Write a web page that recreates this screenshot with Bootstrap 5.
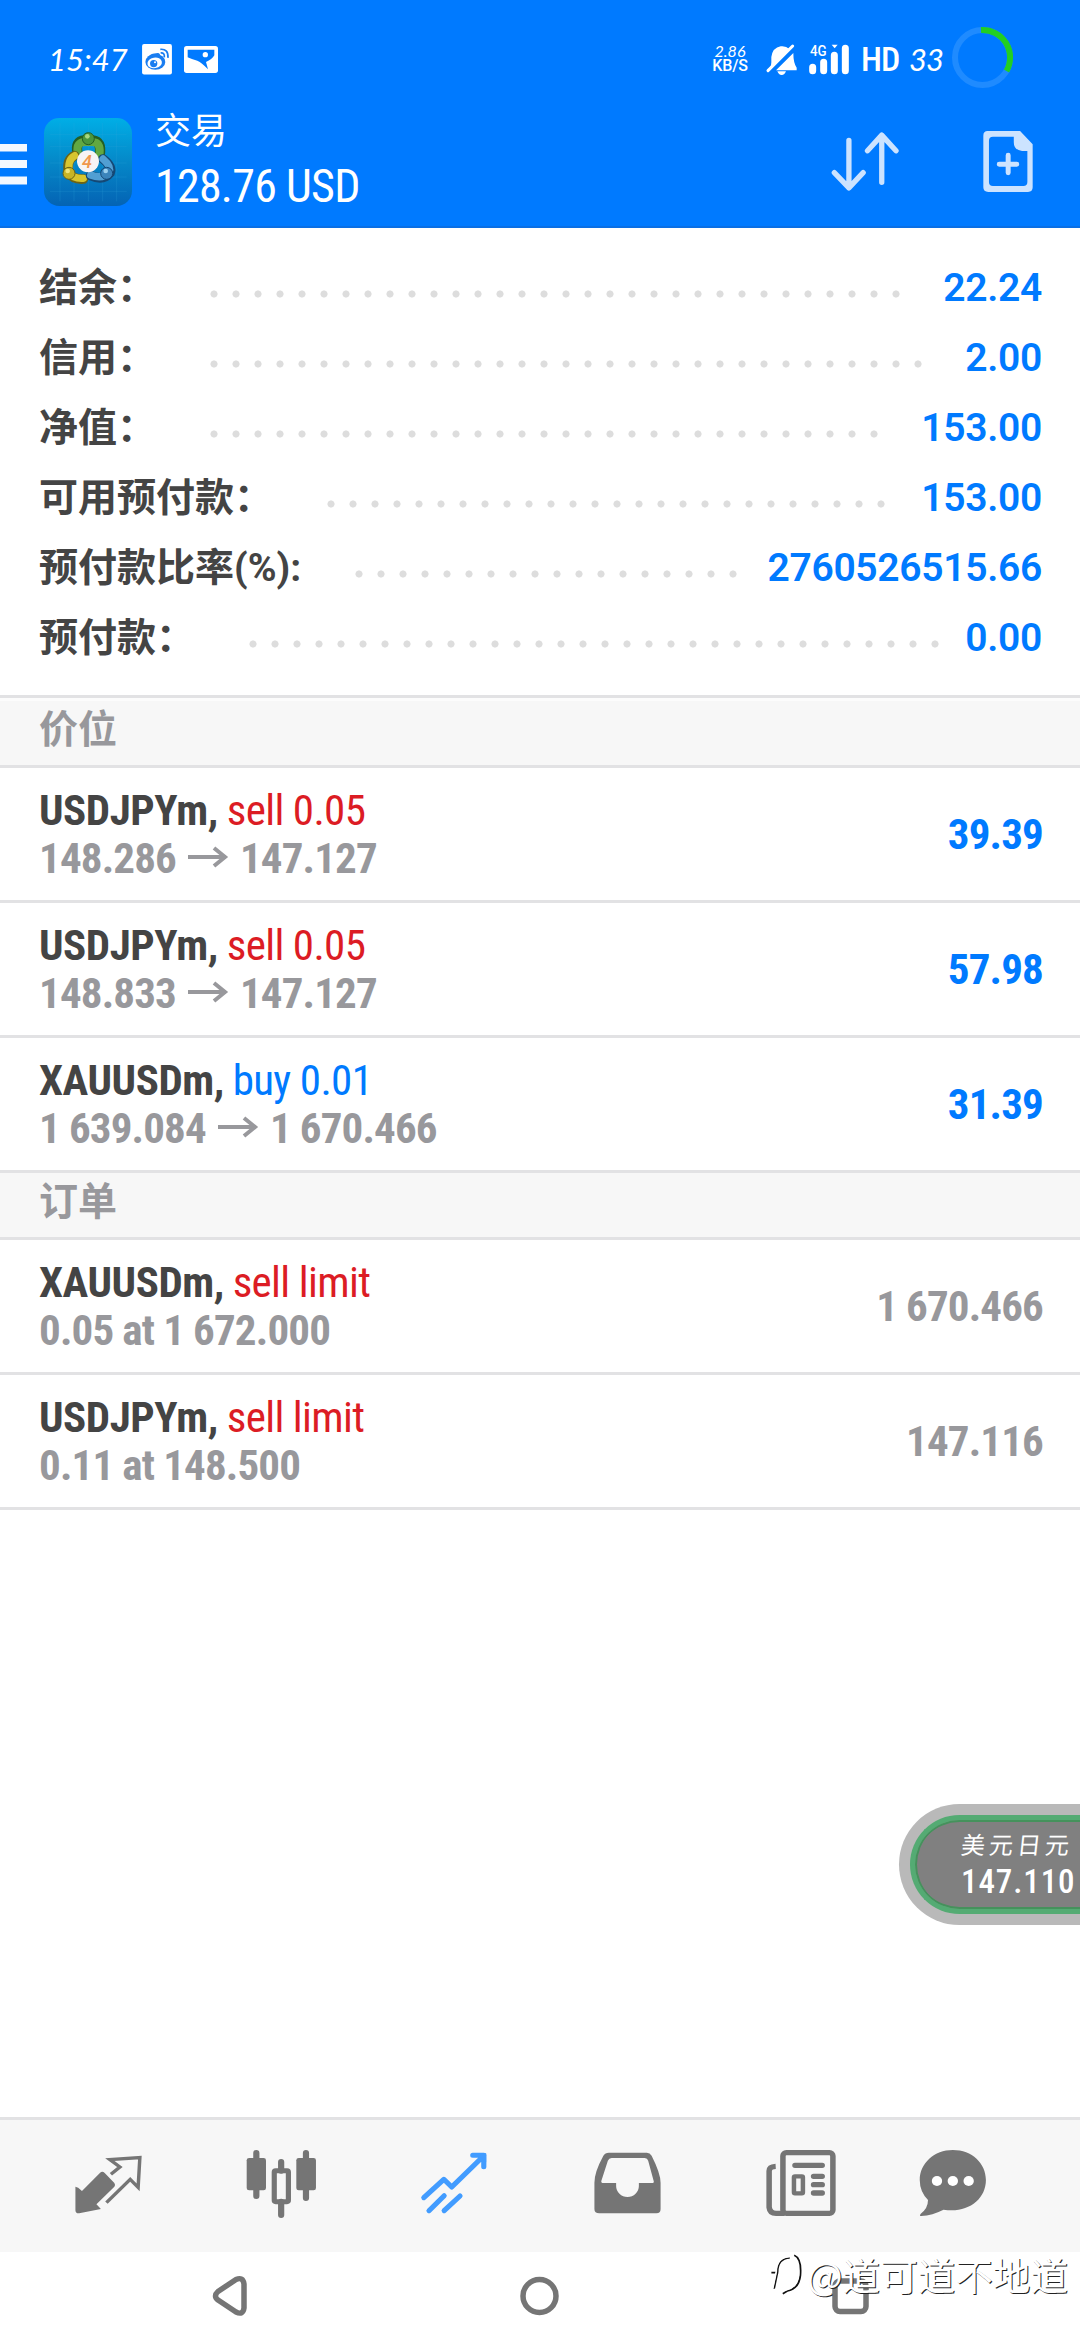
<!DOCTYPE html>
<html lang="zh-CN">
<head>
<meta charset="utf-8">
<meta name="viewport" content="width=device-width, initial-scale=1">
<title>交易</title>
<link href="https://cdn.jsdelivr.net/npm/bootstrap@5.3.0/dist/css/bootstrap.min.css" rel="stylesheet">
<style>
  body{font-family:Roboto,"Noto Sans CJK SC",sans-serif;background:#fff;color:#444;width:1080px;height:2340px;overflow:hidden;position:relative}
  svg{display:block;flex:none;overflow:visible}
  .topbar{background:#007aff;height:228px;color:#fff;border-bottom:2px solid #0a6fe4}
  .statusbar{height:118px;padding-left:48px}
  .hand{font-family:Lato,sans-serif;font-style:italic}
  .clock{font-size:31px;width:94px;line-height:36px}
  .speed{width:38px}
  .speed .rate{font-size:16px;line-height:14px;height:14px}
  .speed .unit{font-size:16px;line-height:16px;font-weight:500;letter-spacing:-.2px}
  .hd{font-family:"Roboto Condensed",Roboto,sans-serif;font-stretch:75%;font-size:34px;font-weight:500;line-height:36px;width:38px;margin-left:11px;letter-spacing:-1px}
  .batt{font-size:31px;width:36px;line-height:36px;margin-left:10px;letter-spacing:-1px}
  .appbar{height:110px}
  .app-title{font-size:36px;line-height:42px}
  .app-sum{font-size:46px;line-height:56px;margin-top:5px;letter-spacing:-.75px;font-family:"Roboto Condensed",Roboto,sans-serif;font-stretch:75%;white-space:nowrap}
  .summary{padding:25px 38px 0 39px;height:467px}
  .sum-row{height:70px;font-size:39px;line-height:70px;font-weight:700;white-space:nowrap}
  .sum-row .val{font-weight:600;color:#007aff;letter-spacing:-.3px}
  .leader{width:calc(var(--dots)*22px);height:70px;margin-left:46.5px;background:radial-gradient(circle at 11px 41px,#ddd 3.2px,transparent 3.9px) 0 0/22px 70px repeat-x}
  .section{background:#f7f7f7;border-top:3px solid #e2e2e4;border-bottom:3px solid #e2e2e4;height:70px;padding:0 39px;font-size:39px;line-height:58px;font-weight:700;color:#98989c}
  .section.first{height:73px;line-height:64px;box-shadow:inset 0 3px #fcfcfc}
  .deal{height:135px;border-bottom:3px solid #e2e2e4;padding:0 37px 0 39px;font-family:"Roboto Condensed",Roboto,sans-serif;font-stretch:75%;font-size:43px;line-height:48px;white-space:nowrap}
  .deal.last-in{height:132px;border-bottom:0}
  .deal .lines{padding-top:18px}
  .deal .sym{font-weight:700;letter-spacing:-.45px}
  .deal .sell,.deal .buy{letter-spacing:-.65px;margin-left:-1px}
  .deal .sell{color:#dc1c24}
  .deal .buy{color:#007aff}
  .deal .sub,.deal .quote{color:#98989c;font-weight:700;letter-spacing:-.85px}
  .deal .quote{line-height:48px;padding-top:42px}
  .deal .quote.gain{color:#007aff}
  .deal svg{display:inline-block;margin:0 12px;vertical-align:6px}
  .tabs{height:135px;border-top:3px solid #e2e2e4;background:#f7f7f7;padding-left:22px}
  .sysnav{height:88px}
  .pill{position:absolute;left:899px;top:1804px;width:181px;height:121px;border-radius:61px 0 0 61px;background:#b9b9b9;padding:11px 0 11px 11px}
  .pill-in{height:99px;border-radius:50px 0 0 50px;border:5px solid #54ab73;border-right:0;box-shadow:inset 0 2px #45925c,inset 2px 0 #45925c,inset 0 -2px #45925c;background:#808080;color:#fff;padding:10px 0 0 46px}
  .pill-name{font-size:24px;line-height:32px;letter-spacing:4px;font-weight:400;transform:skewX(-6deg);white-space:nowrap}
  .pill-val{font-family:"Roboto Condensed",Roboto,sans-serif;font-stretch:75%;font-size:33px;line-height:40px;letter-spacing:.9px;font-weight:500}
  .stamp{position:absolute;left:770px;top:2247px;color:#fff;font-family:"Noto Sans CJK SC",sans-serif;font-size:37.600px;line-height:54px;text-shadow:1px 1px 0 #222;white-space:nowrap}
</style>
</head>
<body>
<header class="topbar">
  <div class="statusbar d-flex align-items-center">
    <span class="hand clock">15:47</span>
    <svg width="30" height="30.5" viewBox="426 132 90 92"><rect x="426" y="132" width="90" height="92" rx="6" fill="#fff"/><ellipse cx="466" cy="186" rx="30" ry="24" fill="#1a7df0"/><path d="M440 182Q446 160 468 160Q482 156 480 170Q494 172 490 184" fill="#1a7df0"/><ellipse cx="464" cy="189" rx="22" ry="16" fill="#fff" transform="rotate(-10 464 189)"/><circle cx="461" cy="191" r="11" fill="#1a7df0"/><circle cx="465" cy="187" r="3" fill="#fff"/><path d="M481 148Q506 146 504 174M482 159Q495 158 493 172" fill="none" stroke="#1a7df0" stroke-width="5"/></svg>
    <svg style="margin-left:12px" width="34" height="27" viewBox="552 138 102 81"><rect x="552" y="138" width="102" height="81" rx="8" fill="#fff"/><path d="M563 149H643V166Q636 178 618 186L624 208Q606 188 592 182Q574 178 563 172Z" fill="#007aff"/><circle cx="616" cy="164" r="8" fill="#fff"/></svg>
    <div class="d-flex align-items-center" style="margin-left:493px">
      <div class="speed text-center"><div class="hand rate">2.86</div><div class="unit">KB/S</div></div>
      <svg style="margin-left:17px" width="31" height="31" viewBox="256 131 93 93"><path d="M272 186V170Q276 142 300 138Q316 136 326 146L268 203Q272 196 272 186Z" fill="#fff"/><path d="M338 158Q338 188 348 202V210H286ZM290 213H316Q312 224 303 224T290 213Z" fill="#fff"/><path d="M262 211L336 137" stroke="#fff" stroke-width="9" stroke-linecap="round"/></svg>
      <svg style="margin-left:12px" width="41" height="31" viewBox="384 132 123 93"><g stroke="#fff" stroke-width="21" stroke-linecap="round"><path d="M395 202V212M428 187V212M460 166V212M493 145V212"/></g><path d="M452 134H470L461 145Z" fill="#fff"/><text x="387" y="168" font-family="Roboto" font-size="44" font-weight="500" fill="#fff" textLength="50" lengthAdjust="spacingAndGlyphs">4G</text></svg>
      <span class="hd">HD</span>
      <span class="hand batt">33</span>
      <svg width="61" height="61" viewBox="0 0 61 61" style="margin-left:7px;margin-top:-3px"><g fill="none" stroke-width="6"><circle cx="30.500" cy="30.500" r="27.500" stroke="#1f8bff"/><path d="M29 3A27.500 27.500 0 0 1 54.500 44" stroke="#22cf22"/></g></svg>
    </div>
  </div>
  <div class="appbar d-flex align-items-start">
    <svg width="27" height="41" viewBox="0 0 27 41" style="margin:26px 17px 0 0"><path d="M0 0H27V7.500H0ZM0 16H27V24H0ZM0 32.500H27V40.500H0Z" fill="#f4f8ff"/></svg>
    <svg width="88" height="88" viewBox="132 355 264 264"><defs><linearGradient id="sky" x2="0" y2="1"><stop offset="0" stop-color="#00aee6"/><stop offset=".5" stop-color="#0588c8"/><stop offset="1" stop-color="#0463b4"/></linearGradient></defs><rect x="132" y="355" width="264" height="264" rx="46" fill="url(#sky)"/><path d="M150 405H380M150 441H380M150 490H380M150 532H380M150 575H380M180 370V605M222 370V605M265 370V605M308 370V605M350 370V605" stroke="#38a8dc" stroke-opacity=".3" stroke-width="2"/><g fill="none" stroke-linecap="round"><path d="M233 462Q224 424 254 422H278Q306 424 299 466" stroke="#245f23" stroke-width="31"/><path d="M233 458Q228 428 254 427H278Q302 428 299 460" stroke="#62a841" stroke-width="24"/><path d="M224 468Q198 480 206 520Q220 540 250 538" stroke="#6d6415" stroke-width="29"/><path d="M224 468Q201 480 208 520Q220 538 250 536" stroke="#d7c52f" stroke-width="22"/><path d="M309 478Q338 500 330 520Q310 544 272 528" stroke="#154875" stroke-width="29"/><path d="M309 478Q335 500 327 518Q308 540 272 526" stroke="#519fd3" stroke-width="22"/></g><circle cx="265" cy="417" r="18" fill="#4a963d" stroke="#245f23" stroke-width="3"/><circle cx="207" cy="521" r="18" fill="#c8b526" stroke="#6d6415" stroke-width="3"/><circle cx="320" cy="521" r="18" fill="#3b84bb" stroke="#154875" stroke-width="3"/><circle cx="262" cy="410" r="7" fill="#a8d77f"/><circle cx="203" cy="514" r="7" fill="#f0e477"/><circle cx="317" cy="514" r="7" fill="#9bd0ef"/><circle cx="264" cy="485" r="33" fill="#f7f4f5"/><text x="246" y="504" font-family="Roboto" font-size="54" font-weight="500" font-style="italic" fill="#f0984d">4</text></svg>
    <div style="margin-left:23px;width:230px">
      <div class="app-title" style="margin-top:-7px">交易</div>
      <div class="app-sum">128.76 USD</div>
    </div>
    <svg width="67" height="60" viewBox="455 396 202 180" style="margin:14px 0 0 447px"><path d="M506 421V564M462 518L506 564L549 518M605 547V405M562 452L605 405L648 452" fill="none" stroke="#cce3ff" stroke-width="16" stroke-linecap="round" stroke-linejoin="round"/></svg>
    <svg width="50" height="61" viewBox="908 394 151 184" style="margin:13px 0 0 84px"><path fill-rule="evenodd" d="M922 394H1020L1058 434V564Q1058 578 1044 578H924Q909 578 909 564V408Q909 394 922 394ZM938 411Q926 411 926 423V548Q926 560 938 560H1030Q1042 560 1042 548V454H1026Q1001 452 1001 428V411Z" fill="#cce3ff"/><path d="M984 467V520M957 494H1010" stroke="#cce3ff" stroke-width="15" stroke-linecap="round"/></svg>
  </div>
</header>

<main>
  <section class="summary">
    <div class="sum-row d-flex"><span>结余：</span><i class="leader" style="--dots:32"></i><span class="val ms-auto">22.24</span></div>
    <div class="sum-row d-flex"><span>信用：</span><i class="leader" style="--dots:33"></i><span class="val ms-auto">2.00</span></div>
    <div class="sum-row d-flex"><span>净值：</span><i class="leader" style="--dots:31"></i><span class="val ms-auto">153.00</span></div>
    <div class="sum-row d-flex"><span>可用预付款：</span><i class="leader" style="--dots:26"></i><span class="val ms-auto">153.00</span></div>
    <div class="sum-row d-flex"><span>预付款比率(%):</span><i class="leader" style="--dots:18"></i><span class="val ms-auto">2760526515.66</span></div>
    <div class="sum-row d-flex"><span>预付款：</span><i class="leader" style="--dots:32"></i><span class="val ms-auto">0.00</span></div>
  </section>
  <div class="section first">价位</div>
  <div class="deal d-flex justify-content-between"><div class="lines"><div><span class="sym">USDJPYm,</span> <span class="sell">sell 0.05</span></div><div class="sub">148.286<svg width="40" height="20" viewBox="0 0 40 20"><path d="M0 10H37M26 1L37 10L26 19" fill="none" stroke="#98989c" stroke-width="4"/></svg>147.127</div></div><div class="quote gain">39.39</div></div>
  <div class="deal d-flex justify-content-between"><div class="lines"><div><span class="sym">USDJPYm,</span> <span class="sell">sell 0.05</span></div><div class="sub">148.833<svg width="40" height="20" viewBox="0 0 40 20"><path d="M0 10H37M26 1L37 10L26 19" fill="none" stroke="#98989c" stroke-width="4"/></svg>147.127</div></div><div class="quote gain">57.98</div></div>
  <div class="deal last-in d-flex justify-content-between"><div class="lines"><div><span class="sym">XAUUSDm,</span> <span class="buy">buy 0.01</span></div><div class="sub">1 639.084<svg width="40" height="20" viewBox="0 0 40 20"><path d="M0 10H37M26 1L37 10L26 19" fill="none" stroke="#98989c" stroke-width="4"/></svg>1 670.466</div></div><div class="quote gain">31.39</div></div>
  <div class="section">订单</div>
  <div class="deal d-flex justify-content-between"><div class="lines"><div><span class="sym">XAUUSDm,</span> <span class="sell">sell limit</span></div><div class="sub">0.05 at 1 672.000</div></div><div class="quote">1 670.466</div></div>
  <div class="deal d-flex justify-content-between"><div class="lines"><div><span class="sym">USDJPYm,</span> <span class="sell">sell limit</span></div><div class="sub">0.11 at 148.500</div></div><div class="quote">147.116</div></div>
  <div style="height:607px"></div>
</main>

<nav class="tabs d-flex">
  <svg width="173" height="132" viewBox="64 60 502 396" preserveAspectRatio="none"><path d="M219 260L227 263L238 273L290 219Q297 212 304 219L332 249Q336 255 332 260L280 313L293 327L230 340Q219 341 219 330Z" fill="#757575"/><path d="M322 223L348 201L319 179L406 173L401 262L378 238L309 308" fill="none" stroke="#757575" stroke-width="10"/></svg>
  <svg width="173" height="132" viewBox="566 60 502 396" preserveAspectRatio="none"><g stroke="#757575" stroke-width="18" stroke-linecap="round"><path d="M744 159V288M816 186V212M816 305V345M888 159V294"/></g><rect x="716" y="174" width="56" height="97" rx="7" fill="#757575"/><rect x="860" y="174" width="57" height="97" rx="7" fill="#757575"/><rect x="796" y="212" width="41" height="93" rx="4" fill="none" stroke="#757575" stroke-width="15"/></svg>
  <svg width="173" height="132" viewBox="1069 60 502 396" preserveAspectRatio="none"><path d="M1231 293L1289 238L1312 261L1405 167M1373 166H1405V200M1246 332L1290 287M1290 332L1336 288" fill="none" stroke="#429cff" stroke-width="15" stroke-linecap="round" stroke-linejoin="round"/><path d="M1385 160H1412V187Z" fill="#429cff"/></svg>
  <svg width="173" height="132" viewBox="3 60 502 396" preserveAspectRatio="none"><path fill-rule="evenodd" d="M200 158H310Q319 158 324 167Q350 220 350 248V327Q350 340 338 340H172Q158 340 158 327V248Q158 216 184 167Q189 158 200 158ZM208 174Q200 174 197 182L178 243Q177 249 184 249H221V258A33 33 0 0 0 287 258V249H325Q332 249 330 243L314 182Q312 174 304 174Z" fill="#757575"/></svg>
  <svg width="173" height="132" viewBox="505 60 502 396" preserveAspectRatio="none"><g fill="none" stroke="#757575" stroke-width="16"><rect x="705" y="158" width="145" height="182" rx="10"/><path d="M684 199Q665 200 665 213V322Q667 340 685 340H710"/><path d="M740 196H819M794 229H819M794 254H819M794 279H819" stroke-linecap="round"/><rect x="737" y="229" width="26" height="51" rx="3" stroke-width="13"/></g></svg>
  <svg width="173" height="132" viewBox="1008 60 502 396" preserveAspectRatio="none"><path d="M1199 150C1255 150 1295 190 1295 240C1295 300 1240 341 1172 329Q1140 346 1107 348Q1101 348 1106 341Q1127 325 1127 300Q1103 275 1103 240C1103 190 1145 150 1199 150Z" fill="#757575"/><circle cx="1153" cy="243" r="15" fill="#fff"/><circle cx="1199" cy="243" r="15" fill="#fff"/><circle cx="1245" cy="243" r="15" fill="#fff"/></svg>
</nav>
<div class="sysnav">
  <svg width="1080" height="88" viewBox="0 2252 1080 88"><g fill="none" stroke="#757575" stroke-width="5.500" stroke-linejoin="round"><path d="M236 2279.500Q243 2276.500 244 2284V2308Q243 2315.500 236 2312L218 2300Q213 2296 218 2291.500Z"/><circle cx="539.500" cy="2296" r="16.500"/><rect x="835" y="2281" width="31" height="30.500" rx="5"/></g></svg>
</div>

<div class="pill"><div class="pill-in"><div class="pill-name">美元日元</div><div class="pill-val">147.110</div></div></div>
<div class="stamp d-flex"><svg width="37" height="54" viewBox="668 465 107 162" preserveAspectRatio="none"><g fill="none" stroke-width="5"><path d="M680 590L690 540Q690 500 725 498M672 542H692M738 490Q760 500 756 550Q752 590 718 597L705 605" stroke="#111"/><path d="M676 588L686 540Q686 496 724 493M708 538H728M732 492Q752 504 750 550Q746 584 714 594" stroke="#fff"/></g></svg>@道可道不地道</div>
<script src="https://cdn.jsdelivr.net/npm/bootstrap@5.3.0/dist/js/bootstrap.bundle.min.js"></script>
</body>
</html>
